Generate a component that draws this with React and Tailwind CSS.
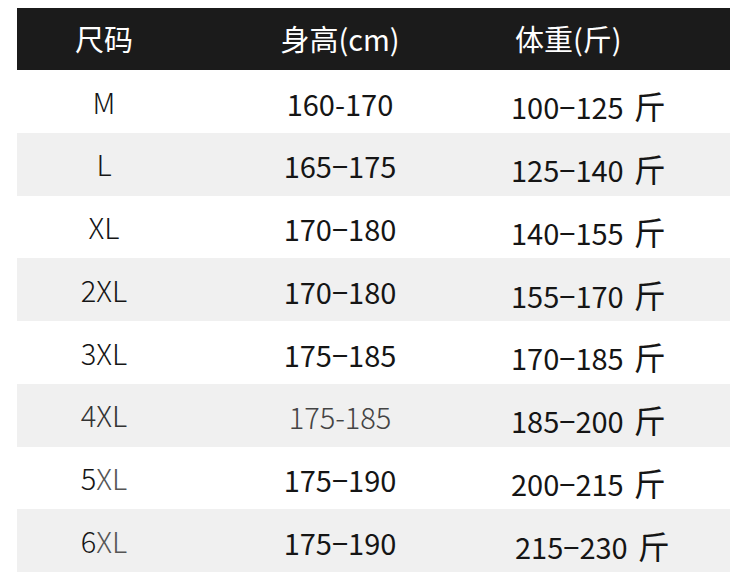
const rows = [
  { size: 'M', height: '160-170', weight: '100−125' },
  { size: 'L', height: '165−175', weight: '125−140' },
  { size: 'XL', height: '170−180', weight: '140−155' },
  { size: '2XL', height: '170−180', weight: '155−170' },
  { size: '3XL', height: '175−185', weight: '170−185' },
  { size: '4XL', height: '175-185', weight: '185−200', soft: true },
  { size: '5XL', height: '175−190', weight: '200−215', split: true },
  { size: '6XL', height: '175−190', weight: '215−230', split: true, shift: true },
];

const font = { fontFamily: '"Noto Sans CJK SC", "Noto Sans", sans-serif' };

export default function App() {
  return (
    <div className="w-[750px] h-[576px] bg-white pt-2 pl-[17px]" style={font}>
      <div className="w-[713px]">
        {/* header */}
        <div className="grid grid-cols-[174px_298px_1fr] h-[62px] items-center bg-[#1b1b1b] text-white text-[29px]">
          <div className="text-center">尺码</div>
          <div className="text-center">身高(cm)</div>
          <div className="pl-[26px]">体重(斤)</div>
        </div>

        {rows.map((r, i) => (
          <div
            key={r.size}
            className={
              'grid grid-cols-[174px_298px_1fr] h-[62.75px] items-center text-[29px] text-[#151515] ' +
              (i % 2 === 1 ? 'bg-[#f0f0f0]' : 'bg-white')
            }
          >
            <div className="text-center font-light">
              {r.split ? (
                <>
                  {r.size[0]}
                  <span className="text-[#555]">{r.size.slice(1)}</span>
                </>
              ) : (
                <span className={r.soft ? 'text-[#333]' : ''}>{r.size}</span>
              )}
            </div>
            <div className={'text-center pt-1 ' + (r.soft ? 'text-[#444] font-light' : '')}>{r.height}</div>
            <div className={'pt-2 flex items-baseline ' + (r.shift ? 'pl-[26px]' : 'pl-[22px]')}>
              {r.weight}
              <span className="ml-[10px] text-[32px]">斤</span>
            </div>
          </div>
        ))}
      </div>
    </div>
  );
}
